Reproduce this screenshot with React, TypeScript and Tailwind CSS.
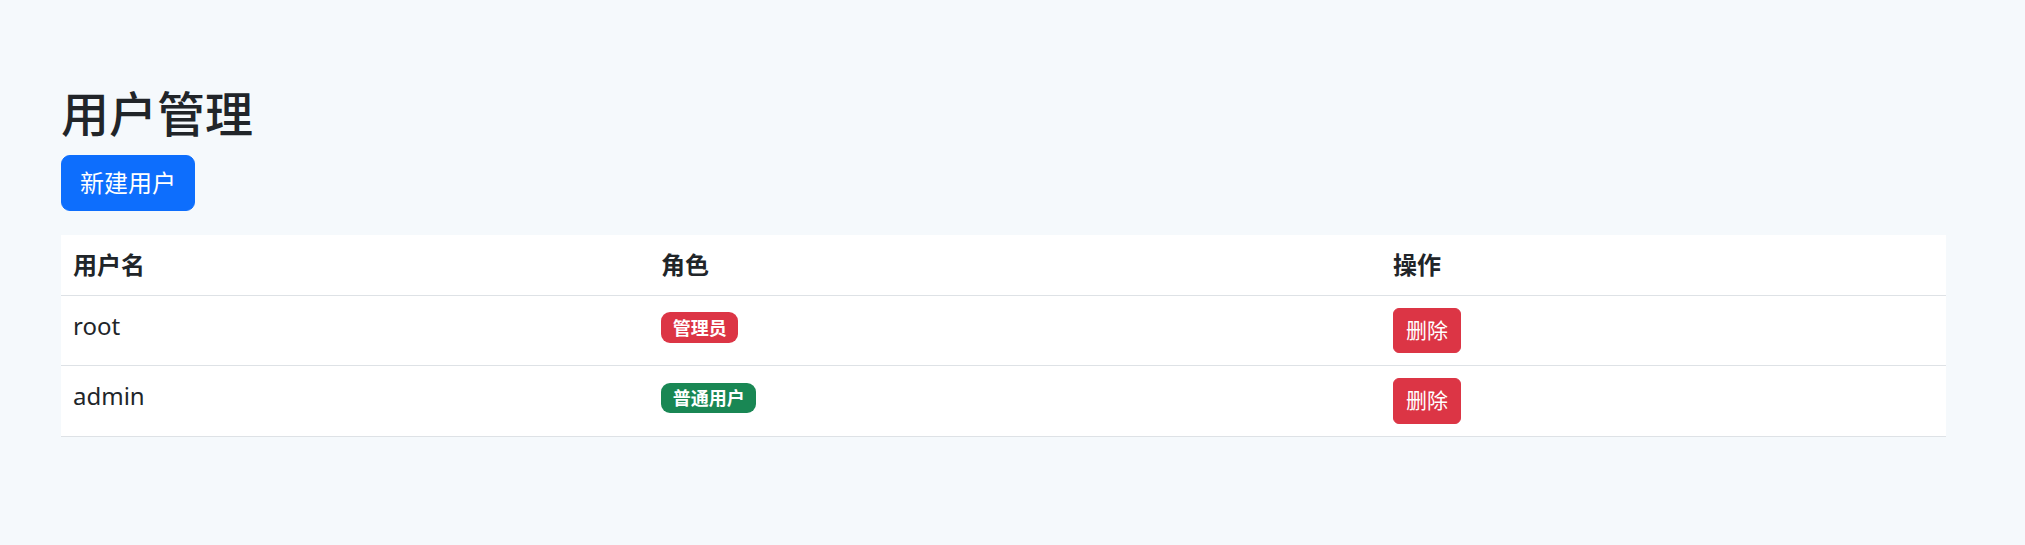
import React from 'react';

interface User {
  name: string;
  role: 'admin' | 'user';
}

const users: User[] = [
  { name: 'root', role: 'admin' },
  { name: 'admin', role: 'user' },
];

const App: React.FC = () => {
  return (
    <div className="min-h-screen bg-[#f5f9fc] text-[#212529] font-['Noto_Sans','Noto_Sans_CJK_SC',sans-serif] text-[24px] leading-[1.5]">
      <div className="pl-[61px] pr-[79px] pt-[85px]">
        <h2 className="text-[48px] leading-[1.2] font-medium mb-[12px]">用户管理</h2>
        <button className="bg-[#0d6efd] text-white text-[24px] leading-[36px] px-[18px] py-[9px] border border-[#0d6efd] rounded-[9px]">
          新建用户
        </button>

        <table className="w-full table-fixed bg-white mt-[24px] border-collapse">
          <colgroup>
            <col className="w-[588px]" />
            <col className="w-[732px]" />
            <col />
          </colgroup>
          <thead>
            <tr>
              <th className="text-left font-bold p-[12px] border-b border-[#dee2e6] align-bottom">用户名</th>
              <th className="text-left font-bold p-[12px] border-b border-[#dee2e6] align-bottom">角色</th>
              <th className="text-left font-bold p-[12px] border-b border-[#dee2e6] align-bottom">操作</th>
            </tr>
          </thead>
          <tbody>
            {users.map((u) => (
              <tr key={u.name}>
                <td className="p-[12px] border-b border-[#dee2e6] align-top">{u.name}</td>
                <td className="p-[12px] border-b border-[#dee2e6] align-top">
                  {u.role === 'admin' ? (
                    <span className="inline-block bg-[#dc3545] text-white text-[18px] leading-none font-bold px-[11.7px] py-[6.3px] rounded-[9px]">
                      管理员
                    </span>
                  ) : (
                    <span className="inline-block bg-[#198754] text-white text-[18px] leading-none font-bold px-[11.7px] py-[6.3px] rounded-[9px]">
                      普通用户
                    </span>
                  )}
                </td>
                <td className="p-[12px] border-b border-[#dee2e6] align-top">
                  <button className="bg-[#dc3545] text-white text-[21px] leading-[31.5px] px-[12px] py-[6px] border border-[#dc3545] rounded-[6px]">
                    删除
                  </button>
                </td>
              </tr>
            ))}
          </tbody>
        </table>
      </div>
    </div>
  );
};

export default App;
